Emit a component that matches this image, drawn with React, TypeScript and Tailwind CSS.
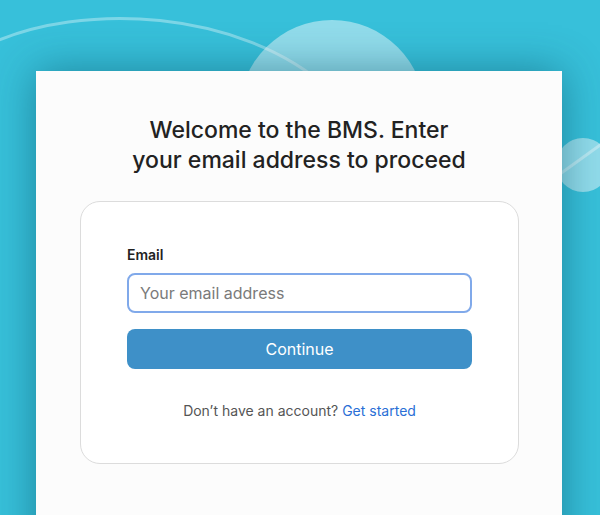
import React from "react";

export default function App() {
  return (
    <div
      className="relative w-[600px] h-[515px] overflow-hidden bg-[#37c0da]"
      style={{ fontFamily: "Inter, 'Noto Sans', sans-serif" }}
    >
      {/* decorations */}
      <svg className="absolute left-0 top-0" width="600" height="515" viewBox="0 0 600 515">
        <circle cx="332" cy="113" r="93" fill="rgba(255,255,255,0.45)" />
        <circle cx="583" cy="165" r="27" fill="rgba(255,255,255,0.45)" />
        <path
          d="M -10 44 C 80 2, 240 8, 330 90"
          stroke="rgba(255,255,255,0.35)"
          strokeWidth="3"
          fill="none"
        />
        <path
          d="M 560 174 L 610 138"
          stroke="rgba(255,255,255,0.35)"
          strokeWidth="3"
          fill="none"
        />
      </svg>

      <div className="relative pt-[71px] pl-[36px]">
        <div className="w-[526px] h-[500px] bg-[#fcfcfc] shadow-[0_0_40px_rgba(0,60,80,0.45)] pt-[44px]">
          <h1 className="text-center text-[23px] leading-[30px] font-medium text-[#222]">
            Welcome to the BMS. Enter
            <br />
            your email address to proceed
          </h1>
          <div className="ml-[44px] mt-[26px] w-[439px] rounded-[20px] border border-[#dcdcdc] bg-white px-[46px] pt-[43px] pb-[42px]">
            <label className="block text-[14px] leading-[20px] font-semibold text-[#222]">Email</label>
            <input
              placeholder="Your email address"
              className="mt-[8px] block w-full h-[40px] rounded-[8px] border-2 border-[#80a9ea] px-[11px] text-[16px] text-[#222] placeholder:text-[#7a7a7a] outline-none bg-white"
            />
            <button className="mt-[16px] block w-full h-[40px] rounded-[8px] bg-[#3e90c8] text-white text-[16px]">
              Continue
            </button>
            <p className="mt-[32px] text-center text-[14px] leading-[20px] text-[#555]">
              Don’t have an account? <span className="text-[#2a6fd6]">Get started</span>
            </p>
          </div>
        </div>
      </div>
    </div>
  );
}
